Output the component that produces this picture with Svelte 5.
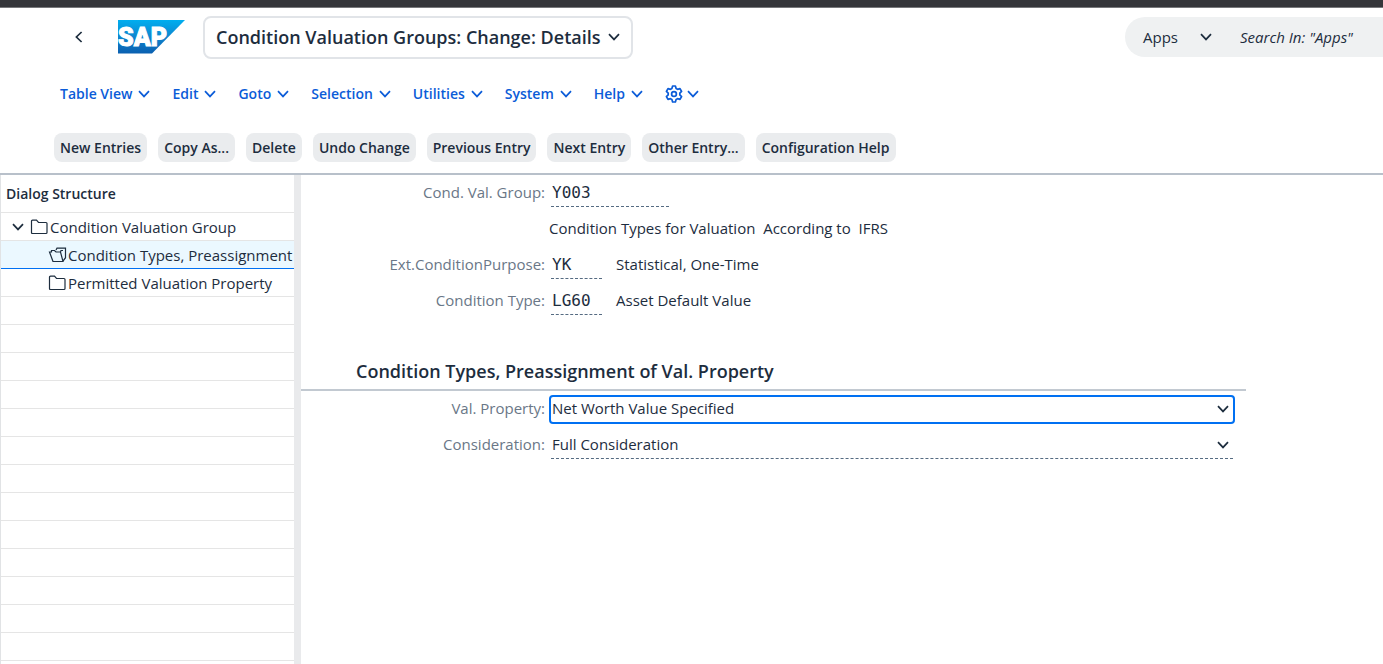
<script lang="ts">
	type TreeNode = {
		label: string;
		level: number;
		open?: boolean;
		selected?: boolean;
	};

	const menus = ['Table View', 'Edit', 'Goto', 'Selection', 'Utilities', 'System', 'Help'];

	const actions = [
		'New Entries',
		'Copy As...',
		'Delete',
		'Undo Change',
		'Previous Entry',
		'Next Entry',
		'Other Entry...',
		'Configuration Help'
	];

	const nodes: TreeNode[] = [
		{ label: 'Condition Valuation Group', level: 1, open: true },
		{ label: 'Condition Types, Preassignment', level: 2, selected: true },
		{ label: 'Permitted Valuation Property', level: 2 }
	];

	const emptyRows = Array.from({ length: 14 }, (_, i) => i);

	let group = $state('Y003');
	let purpose = $state('YK');
	let conditionType = $state('LG60');
	let valProperty = $state('Net Worth Value Specified');
	let consideration = $state('Full Consideration');
	let search = $state('');
</script>

{#snippet chevron()}
	<svg class="chevron" viewBox="0 0 12 8" aria-hidden="true">
		<path d="M1 1.2 6 6.4 11 1.2" />
	</svg>
{/snippet}

<div class="page">
	<div class="top-strip"></div>

	<!-- Shell header -->
	<header class="shell">
		<button type="button" class="back" aria-label="Back">
			<svg viewBox="0 0 8 12" aria-hidden="true"><path d="M6.6 1 1.4 6l5.2 5" /></svg>
		</button>
		<a class="logo" href="#home" aria-label="Home">
			<svg viewBox="0 0 67 34" aria-hidden="true">
				<defs>
					<linearGradient id="logo-fill" x1="0" y1="0" x2="0" y2="1">
						<stop offset="0" stop-color="#00aeef" />
						<stop offset="0.5" stop-color="#0f86cf" />
						<stop offset="1" stop-color="#0a5fb0" />
					</linearGradient>
				</defs>
				<path d="M0 0h67L34 33.5H0z" fill="url(#logo-fill)" />
				<text x="0" y="26">SAP</text>
			</svg>
		</a>
		<button type="button" class="title-btn">
			<span>Condition Valuation Groups: Change: Details</span>
			{@render chevron()}
		</button>
		<div class="search">
			<button type="button" class="scope">
				<span>Apps</span>
				{@render chevron()}
			</button>
			<input aria-label="Search" placeholder={'Search In: "Apps"'} bind:value={search} />
		</div>
	</header>

	<nav class="menu-bar">
		{#each menus as menu}
			<button type="button">{menu}{@render chevron()}</button>
		{/each}
		<button type="button" class="settings" aria-label="Settings">
			<svg class="gear" viewBox="0 0 18 18" aria-hidden="true">
				<path
					d="M7.6 1h2.8l.7 2.5 1.4.8 2.5-.6 1.6 2.7-1.8 1.8v1.6l1.8 1.8-1.6 2.7-2.5-.6-1.4.8-.7 2.5H7.600l-.7-2.500-1.400-.8-2.500.6-1.600-2.700 1.800-1.800V8.200L1.400 6.400 3 3.700l2.500.6 1.400-.8z"
				/>
				<circle cx="9" cy="9" r="2.4" />
			</svg>
			{@render chevron()}
		</button>
	</nav>

	<div class="toolbar">
		{#each actions as action}
			<button type="button">{action}</button>
		{/each}
	</div>

	<div class="workspace">
		<aside class="structure">
			<h2>Dialog Structure</h2>
			<ul role="tree" aria-label="Dialog Structure">
				{#each nodes as node}
					<li
						role="treeitem"
						aria-selected={node.selected ?? false}
						class="level-{node.level}"
						class:selected={node.selected}
					>
						{#if node.open}
							<button type="button" class="toggle" aria-label="Collapse">
								{@render chevron()}
							</button>
						{/if}
						{#if node.selected}
							<svg class="folder" viewBox="0 0 19 16" aria-hidden="true">
								<path d="M5 14.5 1.5 5h2V3.500h3L8 5h4.500L15 14.500zM8 3l1-1.800h8.500v9.500l-2.500 3.500M12.500 5l.5-1.500h2" />
							</svg>
						{:else}
							<svg class="folder" viewBox="0 0 19 16" aria-hidden="true">
								<path d="M1.5 2.2q0-1 1-1h4l2 2.3H16q1 0 1 1v9q0 1-1 1H2.500q-1 0-1-1z" />
							</svg>
						{/if}
						<span>{node.label}</span>
					</li>
				{/each}
			</ul>
			{#each emptyRows as row (row)}
				<div class="empty-row"></div>
			{/each}
		</aside>

		<main>
			<div class="field">
				<label for="group">Cond. Val. Group:</label>
				<input id="group" class="code wide" bind:value={group} />
			</div>
			<div class="field">
				<span class="text solo">Condition Types for Valuation&nbsp; According to&nbsp; IFRS</span>
			</div>
			<div class="field">
				<label for="purpose">Ext.ConditionPurpose:</label>
				<input id="purpose" class="code" bind:value={purpose} />
				<span class="text">Statistical, One-Time</span>
			</div>
			<div class="field">
				<label for="ctype">Condition Type:</label>
				<input id="ctype" class="code" bind:value={conditionType} />
				<span class="text">Asset Default Value</span>
			</div>

			<section>
				<h2>Condition Types, Preassignment of Val. Property</h2>
				<div class="field">
					<label for="property">Val. Property:</label>
					<div class="select focused">
						<select id="property" bind:value={valProperty}>
							<option>Net Worth Value Specified</option>
						</select>
						{@render chevron()}
					</div>
				</div>
				<div class="field">
					<label for="consideration">Consideration:</label>
					<div class="select">
						<select id="consideration" bind:value={consideration}>
							<option>Full Consideration</option>
						</select>
						{@render chevron()}
					</div>
				</div>
			</section>
		</main>
	</div>
</div>

<style>
	:global(body) {
		margin: 0;
		background: #fff;
	}

	.page {
		display: flex;
		flex-direction: column;
		height: 100vh;
		overflow: hidden;
		color: #1d2d3e;
		font-family: 'Open Sans', 'Noto Sans', sans-serif;
		font-size: 15px;
		line-height: 20px;
	}

	button,
	input,
	select {
		margin: 0;
		padding: 0;
		border: 0;
		background: none;
		color: inherit;
		font: inherit;
	}

	button {
		cursor: pointer;
	}

	svg {
		flex: none;
		fill: none;
		stroke: currentColor;
	}

	.chevron {
		width: 12px;
		height: 8px;
		stroke-width: 1.7;
	}

	.top-strip {
		flex: none;
		height: 7px;
		background: #35363a;
		border-bottom: 1px solid #77787b;
	}

	/* Shell header */
	.shell {
		display: flex;
		flex: none;
		align-items: center;
		height: 58px;
		padding-left: 66px;
	}

	.back {
		display: grid;
		place-items: center;
		width: 26px;
		height: 32px;
	}

	.back svg {
		width: 8px;
		height: 12px;
		stroke-width: 1.7;
	}

	.logo {
		margin: 0 18px 0 26px;
	}

	.logo svg {
		display: block;
		width: 67px;
		height: 34px;
		stroke: none;
	}

	.logo text {
		fill: #fff;
		stroke: #fff;
		stroke-width: 1;
		font-family: Roboto, sans-serif;
		font-size: 25px;
		font-weight: 900;
	}

	.title-btn {
		display: flex;
		align-items: center;
		gap: 7px;
		box-sizing: border-box;
		height: 43px;
		padding: 0 11px;
		border: 2px solid #e1e4e8;
		border-radius: 8px;
		font-size: 18px;
		font-weight: 600;
	}

	.search {
		display: flex;
		align-items: center;
		box-sizing: border-box;
		width: 258px;
		height: 40px;
		margin-left: auto;
		padding-left: 18px;
		border-radius: 20px 0 0 20px;
		background: #eff1f2;
	}

	.scope {
		display: flex;
		align-items: center;
		gap: 22px;
	}

	.search input {
		flex: 1;
		min-width: 0;
		margin-left: 28px;
		outline: none;
	}

	.search input::placeholder {
		color: #1d2d3e;
		font-style: italic;
		opacity: 1;
	}

	/* Menus */
	.menu-bar {
		display: flex;
		flex: none;
		align-items: center;
		gap: 22px;
		height: 56px;
		padding-left: 60px;
		color: #0b5cd8;
	}

	.menu-bar button {
		display: flex;
		align-items: center;
		gap: 6px;
		font-size: 14px;
		font-weight: 600;
	}

	.menu-bar .settings {
		gap: 4px;
	}

	.gear {
		width: 18px;
		height: 18px;
		stroke-width: 1.7;
		stroke-linejoin: round;
	}

	.toolbar {
		display: flex;
		flex: none;
		align-items: center;
		gap: 11px;
		height: 51px;
		padding-left: 54px;
		border-bottom: 2px solid #b8c0ca;
	}

	.toolbar button {
		height: 29px;
		padding: 0 6px;
		border-radius: 8px;
		background: #eaecee;
		font-size: 14px;
		font-weight: 600;
		white-space: nowrap;
	}

	/* Dialog structure */
	.workspace {
		display: flex;
		flex: 1;
		min-height: 0;
	}

	.structure {
		flex: none;
		box-sizing: border-box;
		width: 301px;
		overflow: hidden;
		border-left: 1px solid #e1e3e5;
		border-right: 7px solid #e9eaec;
	}

	.structure h2 {
		margin: 0;
		padding: 9px 5px 8px;
		border-bottom: 1px solid #e5e5e5;
		font-size: 14px;
		font-weight: 600;
	}

	.structure ul {
		margin: 0;
		padding: 0;
		list-style: none;
	}

	.structure li,
	.empty-row {
		display: flex;
		align-items: center;
		box-sizing: border-box;
		height: 28px;
		border-bottom: 1px solid #e5e5e5;
		white-space: nowrap;
	}

	.structure .level-1 {
		padding-left: 11px;
	}

	.structure .level-2 {
		padding-left: 47px;
	}

	.structure .selected {
		border-bottom-color: #0070f2;
		background: #ebf8ff;
	}

	.toggle {
		display: flex;
		margin-right: 6px;
	}

	.folder {
		width: 19px;
		height: 16px;
		margin-right: 1px;
		stroke-width: 1.2;
	}

	/* Details form */
	main {
		flex: 1;
		min-width: 0;
		overflow: hidden;
	}

	.field {
		display: grid;
		grid-template-columns: 244px auto 1fr;
		align-items: center;
		column-gap: 4px;
		height: 36px;
	}

	label,
	.text {
		padding-bottom: 2px;
	}

	label {
		color: #6a7787;
		text-align: right;
	}

	.code {
		box-sizing: border-box;
		width: 51px;
		height: 27px;
		margin-left: 2px;
		padding-left: 1px;
		border-bottom: 1px dashed #556b82;
		font-family: 'DejaVu Sans Mono', monospace;
		font-size: 16px;
	}

	.code.wide {
		width: 118px;
	}

	.text {
		padding-left: 10px;
	}

	.text.solo {
		grid-column: 2 / -1;
		padding-left: 0;
	}

	section {
		width: 88%;
		max-width: 945px;
		margin-top: 35px;
	}

	section h2 {
		margin: 0;
		padding: 5px 0 6px 55px;
		border-bottom: 2px solid #c2c9d1;
		font-size: 18px;
		font-weight: 600;
		line-height: 24px;
	}

	.select {
		display: flex;
		grid-column: 2 / -1;
		align-items: center;
		box-sizing: border-box;
		height: 27px;
		margin: 0 13px 0 2px;
		padding: 0 4px 0 1px;
		border-bottom: 1px dashed #556b82;
	}

	.select.focused {
		height: 29px;
		margin: 0 11px 0 0;
		border: 2px solid #0070f2;
		border-radius: 4px;
	}

	.select select {
		flex: 1;
		min-width: 0;
		margin-right: -12px;
		padding-bottom: 2px;
		appearance: none;
		outline: none;
	}

	.select .chevron {
		pointer-events: none;
	}
</style>
